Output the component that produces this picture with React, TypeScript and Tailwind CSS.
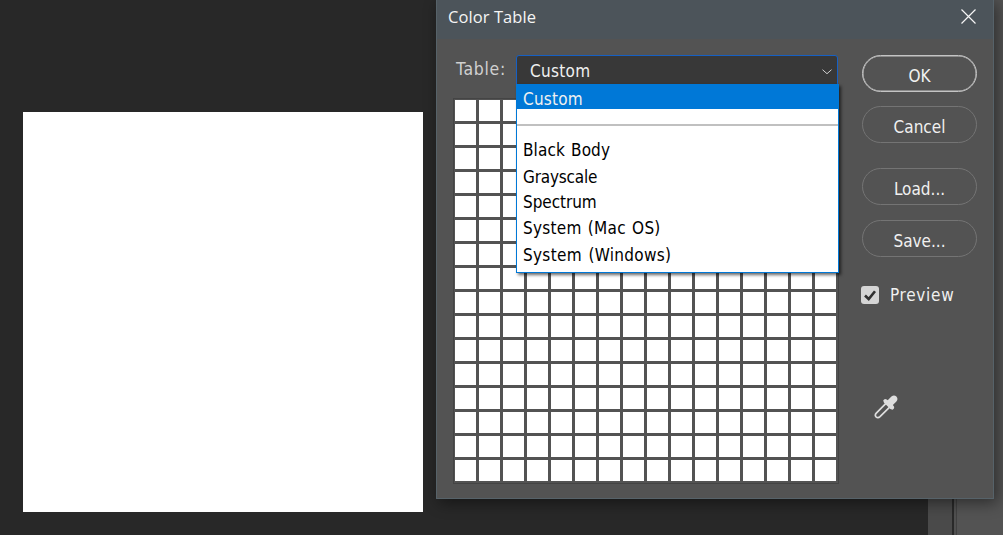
import React from "react";

const options = [
  { label: "Black Body", row: "h-[27px]", tracking: "tracking-[0.1px] [word-spacing:1.2px]" },
  { label: "Grayscale", row: "h-[26px]", tracking: "tracking-[-0.2px]" },
  { label: "Spectrum", row: "h-[25px]", tracking: "tracking-[-0.05px]" },
  { label: "System (Mac OS)", row: "h-[27px]", tracking: "tracking-[0.25px] [word-spacing:1.2px]" },
  { label: "System (Windows)", row: "h-[27px]", tracking: "tracking-[0.3px] [word-spacing:1.5px]" },
];

function DialogButton({ label, className }: { label: string; className: string }) {
  return (
    <button
      className={`flex h-[37px] w-[115px] shrink-0 items-center justify-center rounded-full border pt-[6px] text-[17px] leading-none text-[#f0f0f0] ${className}`}
    >
      {label}
    </button>
  );
}

function ColorSelect() {
  return (
    <div className="relative h-[29px] w-[322px]">
      <div className="flex h-[30px] items-center justify-between rounded-t-[3px] border border-[#1660c4] bg-[#383838] pr-[5px] pl-[13px] text-[17px] leading-none tracking-[0.3px] text-[#f0f0f0]">
        <span className="pt-[2px]">Custom</span>
        <svg width="10" height="6" viewBox="0 0 10 6" className="mt-[4px]" fill="none" stroke="#d0d0d0">
          <path d="M0.5 0.7 L5 4.7 L9.5 0.7" />
        </svg>
      </div>
      <div className="absolute top-[29px] left-0 z-10 flex h-[189px] w-[323px] flex-col border border-t-0 border-[#0078d7] bg-white text-[17px] leading-none text-black shadow-[2px_2px_3px_rgba(0,0,0,0.6)]">
        <div className="flex h-[25px] shrink-0 items-center bg-[#0078d7] pt-[6px] pl-[6px] tracking-[0.2px] text-[#f0f0f0]">Custom</div>
        <div className="mt-[15px] mb-[11px] h-[2px] shrink-0 bg-[#c0c0c0]" />
        {options.map((option) => (
          <div key={option.label} className={`flex shrink-0 items-center pl-[6px] ${option.row} ${option.tracking}`}>
            {option.label}
          </div>
        ))}
      </div>
    </div>
  );
}

function Swatches() {
  return (
    <div className="mt-[14px] ml-[-2px] grid h-[386px] w-[386px] grid-cols-[repeat(16,21px)] grid-rows-[repeat(16,21px)] gap-[3px] border border-[#444444] p-[1px]">
      {Array.from({ length: 256 }, (_, i) => (
        <div key={i} className="bg-white" />
      ))}
    </div>
  );
}

function Dialog() {
  return (
    <section className="absolute -top-px left-[436px] flex h-[500px] w-[558px] flex-col border border-[#566269] bg-[#535353] font-['DejaVu_Sans_Condensed','DejaVu_Sans',sans-serif] [font-stretch:condensed] shadow-[3px_4px_14px_rgba(0,0,0,0.45)]">
      <header className="flex h-[39px] shrink-0 items-center justify-between bg-[#4c545a] pr-[17px] pb-[3px] pl-[11px] font-['Open_Sans','Noto_Sans',sans-serif] text-[16.5px] font-normal text-[#f5f5f5] [font-stretch:normal]">
        <h1 className="pb-px tracking-[0.08px]">Color Table</h1>
        <svg width="15" height="15" viewBox="0 0 15 15" fill="none" stroke="#f5f5f5" strokeWidth="1.2" className="mb-[3px]">
          <path d="M0.5 0.5 L14.5 14.5 M14.5 0.5 L0.5 14.5" />
        </svg>
      </header>
      <div className="flex">
        <div className="w-[407px] pt-[16px] pl-[18px]">
          <div className="flex">
            <label className="w-[61px] pt-[5px] pl-px text-[17.5px] leading-[18px] tracking-[0.7px] text-[#d0d0d0]">Table:</label>
            <ColorSelect />
          </div>
          <Swatches />
        </div>
        <div className="flex flex-col items-start pt-[16px] pl-[18px]">
          <DialogButton label="OK" className="border-[#c4c4c4] shadow-[inset_0_0_0_0.5px_#c4c4c4]" />
          <DialogButton label="Cancel" className="mt-[14px] border-[#747474]" />
          <DialogButton label="Load..." className="mt-[25px] border-[#747474]" />
          <DialogButton label="Save..." className="mt-[15px] border-[#747474]" />
          <label className="mt-[29px] ml-[-1px] flex h-[19px] items-center gap-[11px] text-[17px] leading-none text-[#f0f0f0]">
            <svg width="18" height="18" viewBox="0 0 18 18" className="mb-[2px]">
              <rect width="18" height="18" rx="3" fill="#d5d5d5" />
              <path d="M4 9.5 L7.7 13 L14 5.2" fill="none" stroke="#303030" strokeWidth="2.6" />
            </svg>
            <span className="tracking-[0.7px]">Preview</span>
          </label>
          <svg width="24" height="24" viewBox="0 0 24 24" className="mt-[90px] ml-[12px]">
            <path d="M12.2 8.2 L2.3 18.1 Q0.5 20 2 21.8 Q4 23.5 6 21.7 L15.9 11.8" fill="none" stroke="#dedede" strokeWidth="1.7" />
            <path d="M9.2 5.5 Q10.5 3 12.7 4.5 L13.7 5.2 L17.4 1.5 Q20.2 -0.5 22.4 1.6 Q24.5 4 22.4 6.6 L18.9 10.1 L19.8 11.2 Q21 13.1 18.5 14.7 L16.3 14 L10 7.7 Z" fill="#dedede" />
          </svg>
        </div>
      </div>
    </section>
  );
}

export default function App() {
  return (
    <main className="relative flex h-[535px] w-[1003px] overflow-hidden bg-[#282828]">
      <div className="w-[928px] pt-[112px] pl-[23px]">
        <div className="size-[400px] bg-white" />
      </div>
      <div className="w-[24px] bg-[#4a4a4a]" />
      <div className="w-[2px] bg-[#292929]" />
      <div className="w-[2px] bg-[#505050]" />
      <div className="w-px bg-[#414141]" />
      <div className="flex-1 bg-[#535353]" />
      <Dialog />
    </main>
  );
}
